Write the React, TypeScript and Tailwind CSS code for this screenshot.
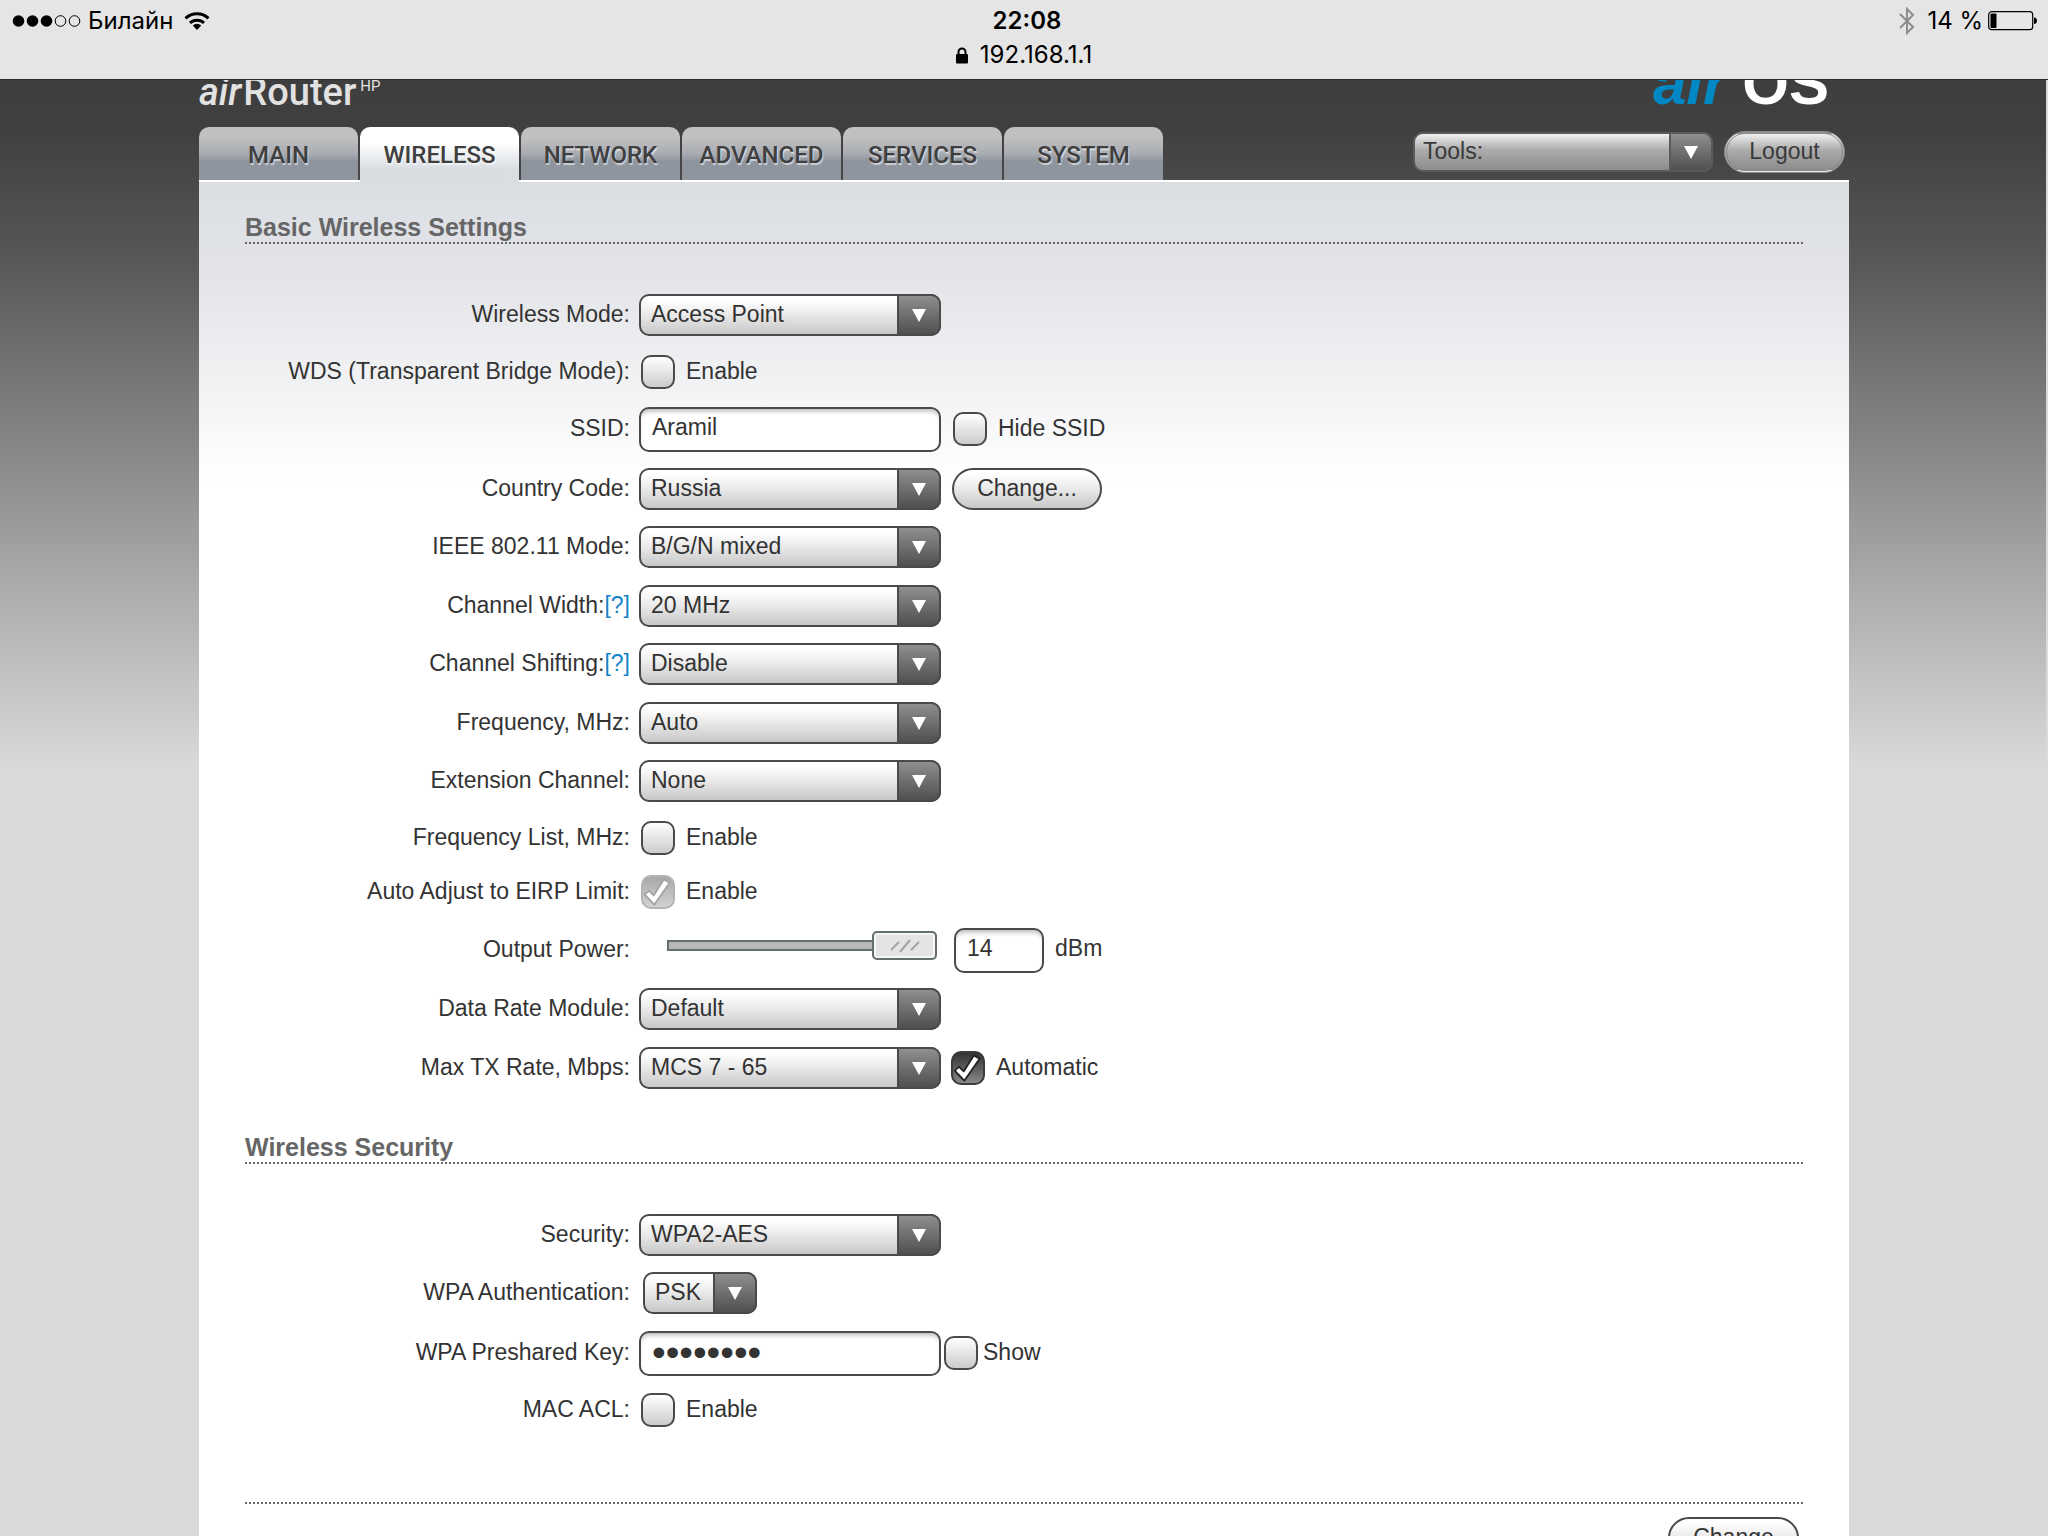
import { useState, type ReactNode } from "react";

const SELECT_LIGHT =
  "border-[#4a4a4a] bg-linear-to-b from-white from-10% via-[#ececec] via-45% to-[#c8c8c8] pl-2.5";
const SELECT_DARK =
  "border-[#5a5a5a] bg-linear-to-b from-[#f0f0f0] via-[#ababab] via-45% to-[#8c8c8c] pl-2";

function Select({
  id,
  value,
  size,
  dark,
  name,
}: {
  id: string;
  value: string;
  size: string;
  dark?: boolean;
  name?: string;
}) {
  return (
    <div className={`relative ${size}`}>
      <select
        id={id}
        aria-label={name}
        defaultValue={value}
        className={`block h-full w-full appearance-none rounded-[10px] border-2 pr-11 pb-0.5 leading-7 outline-none ${
          dark ? SELECT_DARK : SELECT_LIGHT
        }`}
      >
        <option>{value}</option>
      </select>
      <span
        className={`pointer-events-none absolute inset-y-0 right-0 flex w-11 items-center justify-center rounded-r-[10px] border-2 bg-linear-to-b from-[#8f8f8f] to-[#505050] ${
          dark ? "border-[#5a5a5a]" : "border-[#4a4a4a]"
        }`}
      >
        <svg width="16" height="15" viewBox="0 0 16 15" aria-hidden="true">
          <path d="M1 1h14L8 14z" fill="#fff" />
        </svg>
      </span>
    </div>
  );
}

function CheckBox({ id, checked, disabled }: { id: string; checked?: boolean; disabled?: boolean }) {
  const [on, setOn] = useState(Boolean(checked));
  let look = "border-[#4a4a4a] from-white to-[#cccccc]";
  if (on && disabled) look = "border-[#b4b4b4] from-[#a9a9a9] to-[#d2d2d2]";
  else if (on) look = "border-[#3c3c3c] from-[#333333] to-[#8a8a8a]";
  return (
    <span className="relative block size-[34px] shrink-0">
      <input
        id={id}
        type="checkbox"
        checked={on}
        disabled={disabled}
        onChange={() => setOn(!on)}
        className={`block size-full appearance-none rounded-[10px] border-2 bg-linear-to-b ${look}`}
      />
      {on && (
        <svg
          className="pointer-events-none absolute inset-0"
          width="34"
          height="34"
          viewBox="0 0 34 34"
          aria-hidden="true"
        >
          <path
            d="M3.7 19.6L8 15.8l4.7 4.6L22.8 4.4l5.8 3.4L13.3 29.7z"
            fill="#fff"
            stroke={disabled ? "#a3a3a3" : "#222"}
            strokeWidth="1.8"
            strokeLinejoin="round"
          />
        </svg>
      )}
    </span>
  );
}

function CheckField({ id, label, checked, disabled }: { id: string; label: string; checked?: boolean; disabled?: boolean }) {
  return (
    <div className="ml-0.5 flex items-center gap-[11px]">
      <CheckBox id={id} checked={checked} disabled={disabled} />
      <label htmlFor={id} className="pb-0.5">{label}</label>
    </div>
  );
}

function Row({
  id,
  label,
  help,
  height,
  children,
}: {
  id: string;
  label: string;
  help?: boolean;
  height: string;
  children: ReactNode;
}) {
  return (
    <div className={`flex items-start ${height}`}>
      <div className="flex h-[58px] w-[385px] shrink-0 items-center justify-end pb-0.5">
        <label htmlFor={id}>{label}</label>
        {help && (
          <a href="#help" className="text-[#1583c9]">
            [?]
          </a>
        )}
      </div>
      <div className="ml-[9px] flex h-[58px] items-center">{children}</div>
    </div>
  );
}

const TEXT_FIELD =
  "h-[45px] rounded-[10px] border-2 border-[#4a4a4a] bg-white pl-[11px] shadow-[inset_0_5px_5px_-3px_#b5b5b5] outline-none";
const PILL =
  "h-[42px] rounded-full border-2 border-[#4a4a4a] bg-linear-to-b from-white from-10% via-[#ececec] via-45% to-[#c8c8c8] pb-0.5 leading-7";
const WIDE = "h-[42px] w-[302px]";

const SLIDER =
  "h-7 w-[270px] appearance-none bg-transparent [&::-webkit-slider-runnable-track]:h-[11px] [&::-webkit-slider-runnable-track]:shadow-[inset_0_0_0_2px_#66706a] [&::-webkit-slider-runnable-track]:bg-[#b9b9b9] [&::-webkit-slider-thumb]:-mt-[9px] [&::-webkit-slider-thumb]:h-[29px] [&::-webkit-slider-thumb]:w-[65px] [&::-webkit-slider-thumb]:appearance-none [&::-webkit-slider-thumb]:rounded-[5px] [&::-webkit-slider-thumb]:border-2 [&::-webkit-slider-thumb]:border-[#66706a] [&::-webkit-slider-thumb]:bg-[#e4e4e4] [&::-webkit-slider-thumb]:bg-[url('data:image/svg+xml,%3Csvg%20xmlns=%22http://www.w3.org/2000/svg%22%20width=%2232%22%20height=%2216%22%3E%3Cpath%20d=%22M2%2012l8-8M11%2014l10-12M22%2012l8-8%22%20stroke=%22%23a4a4a4%22%20stroke-width=%222%22/%3E%3C/svg%3E')] [&::-webkit-slider-thumb]:bg-center [&::-webkit-slider-thumb]:bg-no-repeat [&::-webkit-slider-thumb]:shadow-[inset_0_0_0_2px_#f6f6f6]";

function StatusBar() {
  return (
    <div className="relative z-20 flex h-20 flex-col border-b border-[#2a2a2a] bg-[#e5e5e5] font-[Inter,sans-serif] text-[24px] leading-8 text-black">
      <div className="grid grid-cols-3 items-center pt-[5px] pr-[10px] pl-3">
        <div className="flex items-center">
          <svg width="69" height="14" viewBox="0 0 69 14" aria-hidden="true">
            <circle cx="6.5" cy="7" r="5.8" />
            <circle cx="20.5" cy="7" r="5.8" />
            <circle cx="34.5" cy="7" r="5.8" />
            <circle cx="48.5" cy="7" r="5.3" fill="none" stroke="#000" />
            <circle cx="62.5" cy="7" r="5.3" fill="none" stroke="#000" />
          </svg>
          <span className="ml-[7px]">Билайн</span>
          <svg className="ml-[11px]" width="26" height="20" viewBox="0 0 26 20" aria-hidden="true">
            <path d="M1.5 7.3a16.5 16.5 0 0 1 23 0" fill="none" stroke="#000" strokeWidth="3" />
            <path d="M6 12a10 10 0 0 1 14 0" fill="none" stroke="#000" strokeWidth="3" />
            <path d="M13 19l-4.2-4.5a6 6 0 0 1 8.4 0z" />
          </svg>
        </div>
        <div className="pl-1 text-center font-semibold">22:08</div>
        <div className="flex items-center justify-end">
          <svg width="16" height="28" viewBox="0 0 16 28" fill="none" stroke="#8c8c8c" strokeWidth="2" aria-hidden="true">
            <path d="M1 7l13 13-6 6V2l6 6L1 21" />
          </svg>
          <span className="ml-3">14 %</span>
          <svg className="ml-[5px]" width="50" height="20" viewBox="0 0 50 20" aria-hidden="true">
            <rect x="0.7" y="0.7" width="44" height="18" rx="3" fill="none" stroke="#000" strokeWidth="1.2" />
            <rect x="2.5" y="2.5" width="6" height="14.5" rx="1" />
            <path d="M46 6.5c4 0 4 6.5 0 6.5z" />
          </svg>
        </div>
      </div>
      <div className="flex items-center justify-center pt-0.5">
        <svg width="12" height="17" viewBox="0 0 12 17" aria-hidden="true">
          <rect y="7" width="12" height="9.5" rx="1" />
          <path d="M2.5 8V5a3.5 3.5 0 0 1 7 0v3" fill="none" stroke="#000" strokeWidth="2" />
        </svg>
        <span className="ml-3">192.168.1.1</span>
      </div>
    </div>
  );
}

const TABS = ["MAIN", "WIRELESS", "NETWORK", "ADVANCED", "SERVICES", "SYSTEM"];

function Header() {
  return (
    <header>
      <div className="flex h-[47px] items-end justify-between">
        <div className="flex items-end font-[Roboto,sans-serif] text-[38px] leading-[69px] font-medium text-[#e2e2e2]">
          <span className="italic">air</span>
          <span className="ml-0.5">Router</span>
          <span className="ml-1 pb-[29px] text-[15px] leading-6 font-normal">HP</span>
        </div>
        <div className="mr-5 flex items-baseline text-[60px] leading-[86px] font-bold">
          <span className="text-[#0088c4] italic">air</span>
          <span className="ml-4 text-white">OS</span>
        </div>
      </div>
      <div className="flex items-start justify-between">
        <nav className="flex gap-0.5">
          {TABS.map((tab) => {
            const active = tab === "WIRELESS";
            return (
              <a
                key={tab}
                href={`#${tab.toLowerCase()}`}
                className={`flex w-[159px] justify-center rounded-t-[10px] pt-2.5 font-[Roboto,sans-serif] text-[24px] leading-9 font-medium text-[#3f3f3f] [text-shadow:1px_2px_1px_#ffffff90] ${
                  active
                    ? "relative z-10 -mb-0.5 h-[55px] bg-linear-to-b from-white from-30% to-[#dadee3] to-75%"
                    : "h-[53px] bg-linear-to-b from-[#c0c0c0] from-20% via-[#a9acb2] via-50% to-[#8f959e] to-65%"
                }`}
              >
                {tab}
              </a>
            );
          })}
        </nav>
        <div className="mt-1 mr-[4px] flex items-center gap-[11px] text-[#3a3a3a]">
          <Select id="tools" name="Tools" value="Tools:" size="h-10 w-[300px]" dark />
          <button
            type="button"
            className="h-[42px] w-[121px] rounded-full border-[3px] border-double border-[#8a8a8a] bg-linear-to-b from-[#f0f0f0] via-[#ababab] via-45% to-[#8c8c8c] pb-0.5 leading-7"
          >
            Logout
          </button>
        </div>
      </div>
    </header>
  );
}

function SectionTitle({ children }: { children: ReactNode }) {
  return (
    <h2 className="border-b-2 border-dotted border-[#666666] pb-px text-[25px] leading-7 font-bold text-[#666666]">
      {children}
    </h2>
  );
}

export default function App() {
  return (
    <div className="h-screen overflow-hidden font-['Liberation_Sans',sans-serif] text-[23px] leading-7 text-[#333333]">
      <StatusBar />
      <div className="min-h-full border-r-2 border-[#dadada] bg-[#dadada] bg-[linear-gradient(to_bottom,#3e3e3e_0px,#404040_50px,#575757_180px,#dadada_690px)]">
        <div className="ml-[199px] mr-[197px]">
          <Header />
          <main className="min-h-screen border-t-2 border-white bg-[linear-gradient(to_bottom,#dadee3_0px,#e4e5e9_100px,#ffffff_300px)] px-[46px] pt-[31px]">
            <form onSubmit={(e) => e.preventDefault()}>
              <SectionTitle>Basic Wireless Settings</SectionTitle>
              <div className="pt-[42px]">
                <Row id="mode" label="Wireless Mode:" height="h-[57px]">
                  <Select id="mode" value="Access Point" size={WIDE} />
                </Row>
                <Row id="wds" label="WDS (Transparent Bridge Mode):" height="h-[57px]">
                  <CheckField id="wds" label="Enable" />
                </Row>
                <Row id="ssid" label="SSID:" height="h-[60px]">
                  <input id="ssid" type="text" defaultValue="Aramil" className={`${TEXT_FIELD} w-[302px] pb-1`} />
                  <span className="ml-2.5">
                    <CheckField id="hide" label="Hide SSID" />
                  </span>
                </Row>
                <Row id="country" label="Country Code:" height="h-[58px]">
                  <Select id="country" value="Russia" size={WIDE} />
                  <button type="button" className={`${PILL} ml-[11px] w-[150px]`}>
                    Change...
                  </button>
                </Row>
                <Row id="ieee" label="IEEE 802.11 Mode:" height="h-[59px]">
                  <Select id="ieee" value="B/G/N mixed" size={WIDE} />
                </Row>
                <Row id="width" label="Channel Width:" help height="h-[58px]">
                  <Select id="width" value="20 MHz" size={WIDE} />
                </Row>
                <Row id="shift" label="Channel Shifting:" help height="h-[59px]">
                  <Select id="shift" value="Disable" size={WIDE} />
                </Row>
                <Row id="freq" label="Frequency, MHz:" height="h-[58px]">
                  <Select id="freq" value="Auto" size={WIDE} />
                </Row>
                <Row id="ext" label="Extension Channel:" height="h-[57px]">
                  <Select id="ext" value="None" size={WIDE} />
                </Row>
                <Row id="list" label="Frequency List, MHz:" height="h-[54px]">
                  <CheckField id="list" label="Enable" />
                </Row>
                <Row id="eirp" label="Auto Adjust to EIRP Limit:" height="h-[58px]">
                  <CheckField id="eirp" label="Enable" checked disabled />
                </Row>
                <Row id="power" label="Output Power:" height="h-[59px]">
                  <input
                    type="range"
                    aria-label="Output Power"
                    min={0}
                    max={14}
                    defaultValue={14}
                    className={`${SLIDER} mb-[9px] ml-7`}
                  />
                  <input id="power" type="text" defaultValue="14" className={`${TEXT_FIELD} ml-[17px] w-[90px] pb-1`} />
                  <span className="ml-[11px] pb-1">dBm</span>
                </Row>
                <Row id="rate" label="Data Rate Module:" height="h-[59px]">
                  <Select id="rate" value="Default" size={WIDE} />
                </Row>
                <Row id="tx" label="Max TX Rate, Mbps:" height="h-[58px]">
                  <Select id="tx" value="MCS 7 - 65" size={WIDE} />
                  <span className="ml-2">
                    <CheckField id="auto" label="Automatic" checked />
                  </span>
                </Row>
              </div>

              <div className="mt-9">
                <SectionTitle>Wireless Security</SectionTitle>
              </div>
              <div className="pt-[42px]">
                <Row id="security" label="Security:" height="h-[58px]">
                  <Select id="security" value="WPA2-AES" size={WIDE} />
                </Row>
                <Row id="auth" label="WPA Authentication:" height="h-[60px]">
                  <span className="ml-1">
                    <Select id="auth" value="PSK" size="h-[42px] w-[114px]" />
                  </span>
                </Row>
                <Row id="key" label="WPA Preshared Key:" height="h-[57px]">
                  <input
                    id="key"
                    type="password"
                    defaultValue="password"
                    className={`${TEXT_FIELD} w-[302px] text-[39px]`}
                  />
                  <span className="ml-[3px] flex items-center gap-[5px]">
                    <CheckBox id="show" />
                    <label htmlFor="show" className="pb-0.5">Show</label>
                  </span>
                </Row>
                <Row id="acl" label="MAC ACL:" height="h-[58px]">
                  <CheckField id="acl" label="Enable" />
                </Row>
              </div>
              <div className="mt-[63px] flex justify-end border-t-2 border-dotted border-[#666666] pt-[13px] pr-1">
                <button type="submit" className={`${PILL} w-[131px]`}>
                  Change
                </button>
              </div>
            </form>
          </main>
        </div>
      </div>
    </div>
  );
}
